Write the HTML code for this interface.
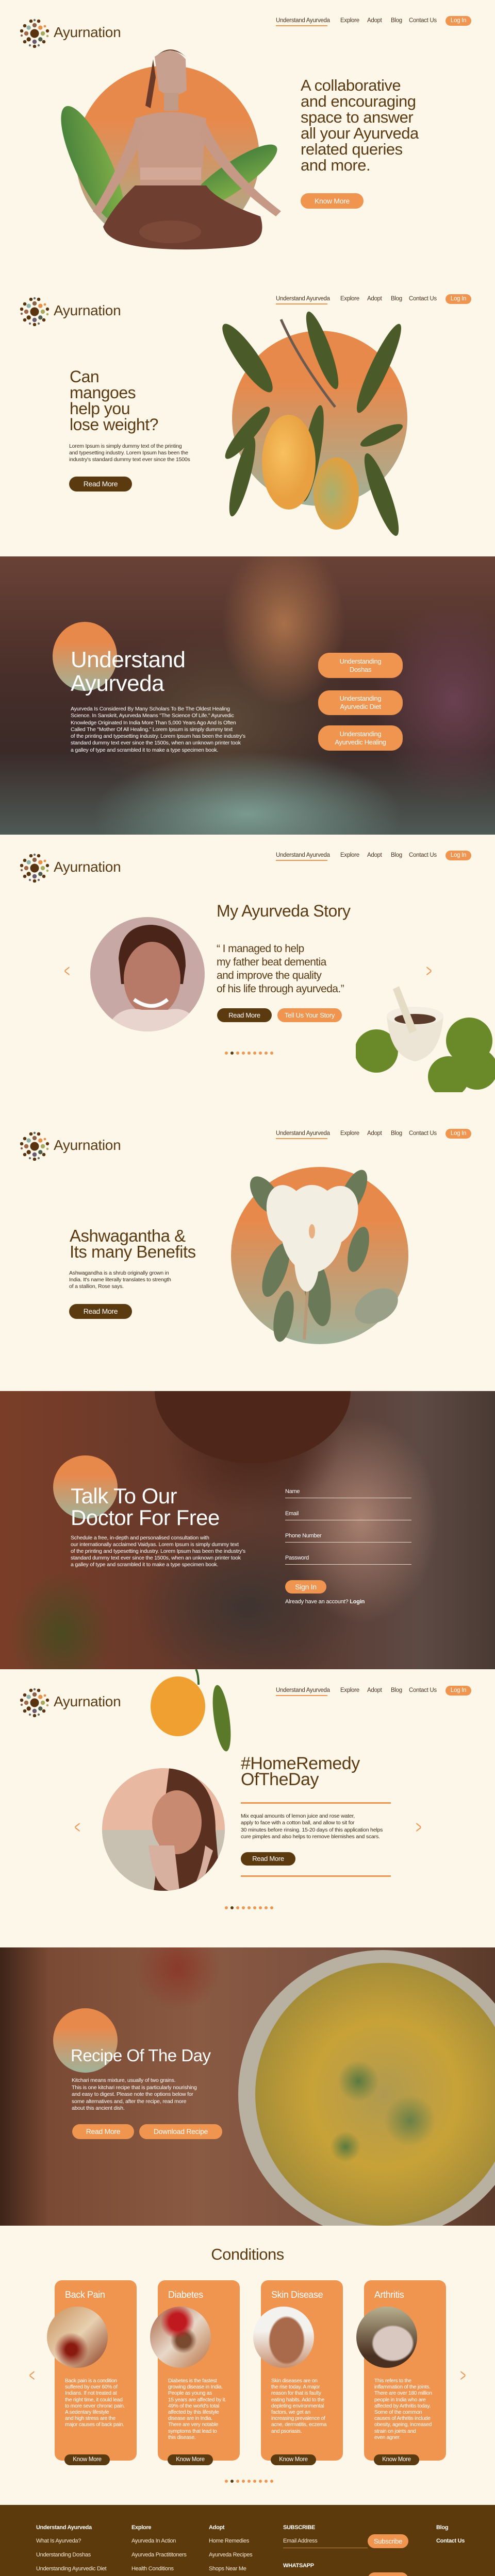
<!DOCTYPE html>
<html><head><meta charset="utf-8">
<style>
*{margin:0;padding:0;box-sizing:border-box}
html{width:960px;height:5058px;overflow:hidden}
body{width:960px;height:5058px;background:#fdf7ea;font-family:"Liberation Sans",sans-serif;color:#5b3a12;position:relative;overflow:hidden}
.a{position:absolute}
.nav{position:absolute;font-size:11.5px;color:#4a3320;letter-spacing:-0.3px;white-space:nowrap;height:1px}
.nav span{position:absolute;top:-7px}
.login{position:absolute;left:864px;width:50px;height:19px;top:-10px;border-radius:10px;background:#ef9550;color:#fff;text-align:center;line-height:19px;font-size:11.5px}
.ul{position:absolute;left:535px;width:100px;top:8px;height:1.5px;background:#ef9550}
.logotxt{position:absolute;left:104px;font-size:28px;color:#5b3a12;letter-spacing:-0.3px}
.btn{position:absolute;border-radius:16px;color:#fff;text-align:center;font-size:13px;letter-spacing:-0.3px;white-space:nowrap}
.o{background:#ef9550}.d{background:#5c3a0f}
.h{font-weight:normal;letter-spacing:-0.5px;white-space:nowrap}
.p{font-size:10.5px;letter-spacing:-0.2px;white-space:nowrap}
.w{color:#fff}
.gc{border-radius:50%;background:linear-gradient(#e8894c 30%,#9fb29a 100%)}
.card{position:absolute;top:4426px;width:159px;height:350px;background:#ef9550;border-radius:14px}
.card h4{position:absolute;left:20px;top:18px;font-size:18px;font-weight:normal;color:#fff;letter-spacing:-0.4px}
.card .im{position:absolute;left:-15px;top:51px;width:118px;height:119px;border-radius:50%}
.card .t{position:absolute;left:20px;top:190px;font-size:10.3px;line-height:12.2px;color:#fff;letter-spacing:-0.3px;white-space:nowrap}
.card .b{position:absolute;left:19px;top:338px;width:88px;height:21px;border-radius:11px;background:#5c3a0f;color:#fff;font-size:11.5px;line-height:21px;text-align:center;letter-spacing:-0.3px}
.arr{position:absolute;font-size:34px;color:#ef9550;font-weight:100;transform:scaleX(.55)}
.dots{position:absolute;left:436px;width:120px;height:6px;display:flex;gap:5px}
.dots i{display:block;width:6px;height:6px;border-radius:50%;background:#ef9550;flex:none}
.dots i.k{background:#5c3a0f}
.f{position:absolute;font-size:11px;color:#f5ead8;letter-spacing:-0.3px;white-space:nowrap}
.fh{font-weight:bold;color:#fff}
.fl{position:absolute;color:#fff;font-size:11px;letter-spacing:-0.3px}
.fl i{position:absolute;left:0;top:18px;width:245px;height:1px;background:#e8dccb}
</style></head><body>

<svg class="a" style="left:39px;top:36px" width="57" height="57" viewBox="0 0 57 57">
<circle cx="28" cy="29" r="8.5" fill="#5a3410"/>
<circle cx="28" cy="13" r="4.2" fill="#8a6048"/><circle cx="39.3" cy="17.7" r="4.2" fill="#e8904a"/><circle cx="44" cy="29" r="4.2" fill="#a8a860"/><circle cx="39.3" cy="40.3" r="4.2" fill="#4e5e4e"/><circle cx="28" cy="45" r="4.2" fill="#6a5a70"/><circle cx="16.7" cy="40.3" r="4.2" fill="#5a3410"/><circle cx="12" cy="29" r="4.2" fill="#a06848"/><circle cx="16.7" cy="17.7" r="4.2" fill="#8fb2a8"/>
<circle cx="28" cy="3" r="2.2" fill="#6a6a6a"/><circle cx="21" cy="5" r="3.3" fill="#5a3410"/><circle cx="36" cy="5" r="3.3" fill="#5a3410"/><circle cx="48" cy="15" r="2.4" fill="#e8904a"/><circle cx="53" cy="24" r="3.2" fill="#5a3410"/><circle cx="53" cy="34" r="2.2" fill="#a8a860"/><circle cx="46" cy="45" r="3.3" fill="#5a3410"/><circle cx="36" cy="52" r="2.2" fill="#6a6a6a"/><circle cx="28" cy="54" r="3.3" fill="#5a3410"/><circle cx="19" cy="52" r="2.2" fill="#6a6a6a"/><circle cx="9" cy="45" r="3.3" fill="#5a3410"/><circle cx="3" cy="33" r="2.2" fill="#8a6048"/><circle cx="3" cy="24" r="3.3" fill="#5a3410"/><circle cx="9" cy="14" r="3.3" fill="#5a3410"/>
</svg>
<div class="logotxt" style="top:47px">Ayurnation</div>
<div class="nav" style="top:41px;left:0;width:960px"><span style="left:535px">Understand Ayurveda</span><div class="ul"></div><span style="left:660px">Explore</span><span style="left:712px">Adopt</span><span style="left:758px">Blog</span><span style="left:793px">Contact Us</span><div class="login">Log In</div></div>

<svg class="a" style="left:0;top:0" width="960" height="540">
<defs><linearGradient id="g1" x1="0" y1="0" x2="0" y2="1"><stop offset=".3" stop-color="#e8894c"/><stop offset="1" stop-color="#9fb29a"/></linearGradient>
<linearGradient id="lf" x1="0" y1="0" x2="1" y2="1"><stop offset="0" stop-color="#3f7a3a"/><stop offset="1" stop-color="#8bb84a"/></linearGradient></defs>
<circle cx="325" cy="305" r="178" fill="url(#g1)"/>
<ellipse cx="180" cy="320" rx="35" ry="125" transform="rotate(-25 180 320)" fill="url(#lf)"/>
<ellipse cx="450" cy="345" rx="28" ry="105" transform="rotate(55 450 345)" fill="url(#lf)"/>
<path d="M300 110 Q335 85 360 115 L362 175 Q335 195 308 175 Z" fill="#c8a090"/>
<path d="M300 112 Q330 80 362 112 Q350 100 330 98 Q310 100 300 112Z M297 115 L282 205 L292 210 L302 150Z" fill="#6b3b2a"/>
<rect x="318" y="180" width="28" height="35" fill="#c29a88"/>
<path d="M262 230 Q330 205 400 230 L390 360 L272 360 Z" fill="#c79a88"/>
<rect x="272" y="325" width="118" height="24" fill="#d4a896"/>
<path d="M262 235 Q230 330 180 410 L192 420 Q245 340 280 260Z" fill="#c69886"/>
<path d="M398 235 Q440 330 545 410 L535 420 Q430 345 385 260Z" fill="#c69886"/>
<path d="M262 360 L400 360 Q420 390 505 420 Q520 470 470 478 Q380 488 300 482 Q210 475 200 440 Q220 400 262 360Z" fill="#6e3e30"/>
<ellipse cx="330" cy="450" rx="60" ry="22" fill="#7c4838"/>
</svg>
<div class="a h" style="left:583px;top:150px;font-size:31px;line-height:31px;color:#5b3a12">A collaborative<br>and encouraging<br>space to answer<br>all your Ayurveda<br>related queries<br>and more.</div>
<div class="btn o" style="left:583px;top:375px;width:122px;height:30px;line-height:30px;font-size:14px">Know More</div>

<svg class="a" style="left:39px;top:576px" width="57" height="57" viewBox="0 0 57 57">
<circle cx="28" cy="29" r="8.5" fill="#5a3410"/>
<circle cx="28" cy="13" r="4.2" fill="#8a6048"/><circle cx="39.3" cy="17.7" r="4.2" fill="#e8904a"/><circle cx="44" cy="29" r="4.2" fill="#a8a860"/><circle cx="39.3" cy="40.3" r="4.2" fill="#4e5e4e"/><circle cx="28" cy="45" r="4.2" fill="#6a5a70"/><circle cx="16.7" cy="40.3" r="4.2" fill="#5a3410"/><circle cx="12" cy="29" r="4.2" fill="#a06848"/><circle cx="16.7" cy="17.7" r="4.2" fill="#8fb2a8"/>
<circle cx="28" cy="3" r="2.2" fill="#6a6a6a"/><circle cx="21" cy="5" r="3.3" fill="#5a3410"/><circle cx="36" cy="5" r="3.3" fill="#5a3410"/><circle cx="48" cy="15" r="2.4" fill="#e8904a"/><circle cx="53" cy="24" r="3.2" fill="#5a3410"/><circle cx="53" cy="34" r="2.2" fill="#a8a860"/><circle cx="46" cy="45" r="3.3" fill="#5a3410"/><circle cx="36" cy="52" r="2.2" fill="#6a6a6a"/><circle cx="28" cy="54" r="3.3" fill="#5a3410"/><circle cx="19" cy="52" r="2.2" fill="#6a6a6a"/><circle cx="9" cy="45" r="3.3" fill="#5a3410"/><circle cx="3" cy="33" r="2.2" fill="#8a6048"/><circle cx="3" cy="24" r="3.3" fill="#5a3410"/><circle cx="9" cy="14" r="3.3" fill="#5a3410"/>
</svg>
<div class="logotxt" style="top:587px">Ayurnation</div>
<div class="nav" style="top:581px;left:0;width:960px"><span style="left:535px">Understand Ayurveda</span><div class="ul"></div><span style="left:660px">Explore</span><span style="left:712px">Adopt</span><span style="left:758px">Blog</span><span style="left:793px">Contact Us</span><div class="login">Log In</div></div>

<svg class="a" style="left:0;top:540px" width="960" height="540">
<defs><linearGradient id="g2" x1="0" y1="0" x2="0" y2="1"><stop offset=".3" stop-color="#e8894c"/><stop offset="1" stop-color="#9fb29a"/></linearGradient>
<radialGradient id="mg" cx=".4" cy=".4"><stop offset="0" stop-color="#f8c060"/><stop offset="1" stop-color="#e8a040"/></radialGradient>
<radialGradient id="mg2" cx=".4" cy=".5"><stop offset="0" stop-color="#a8b070"/><stop offset="1" stop-color="#e0a040"/></radialGradient></defs>
<circle cx="620" cy="272" r="170" fill="url(#g2)"/>
<g fill="#4a5a28">
<ellipse cx="480" cy="155" rx="20" ry="80" transform="rotate(-35 480 155)"/>
<ellipse cx="625" cy="140" rx="16" ry="80" transform="rotate(-20 625 140)"/>
<ellipse cx="735" cy="175" rx="17" ry="95" transform="rotate(25 735 175)"/>
<ellipse cx="480" cy="300" rx="15" ry="65" transform="rotate(40 480 300)"/>
<ellipse cx="470" cy="385" rx="15" ry="80" transform="rotate(15 470 385)"/>
<ellipse cx="740" cy="305" rx="12" ry="45" transform="rotate(65 740 305)"/>
<ellipse cx="740" cy="420" rx="17" ry="85" transform="rotate(-20 740 420)"/>
<ellipse cx="605" cy="340" rx="16" ry="95" transform="rotate(10 605 340)"/>
</g>
<path d="M545 80 Q580 160 650 250" stroke="#6a5a50" stroke-width="5" fill="none"/>
<ellipse cx="560" cy="357" rx="52" ry="92" fill="url(#mg)"/>
<ellipse cx="652" cy="418" rx="44" ry="70" fill="url(#mg2)"/>
</svg>
<div class="a h" style="left:135px;top:716px;font-size:32px;line-height:31px">Can<br>mangoes<br>help you<br>lose weight?</div>
<div class="a p" style="left:134px;top:860px;line-height:13px;color:#3a2a1a">Lorem Ipsum is simply dummy text of the printing<br>and typesetting industry. Lorem Ipsum has been the<br>industry's standard dummy text ever since the 1500s</div>
<div class="btn d" style="left:134px;top:925px;width:122px;height:29px;line-height:29px;font-size:14px">Read More</div>

<div class="a" style="left:0;top:1080px;width:960px;height:540px;background:
radial-gradient(ellipse 120px 160px at 550px 130px,#a8704a,transparent),
radial-gradient(ellipse 160px 200px at 880px 280px,#6a4050,transparent),
radial-gradient(ellipse 300px 120px at 480px 500px,#7a9a90,transparent),
radial-gradient(ellipse 260px 180px at 430px 320px,#5e4a38,transparent),
linear-gradient(#6a4236 0%,#4a2f2a 40%,#3a2a28 70%,#4e5a56 100%)"></div>
<div class="a gc" style="left:102px;top:1207px;width:125px;height:134px"></div>
<div class="a h w" style="left:137px;top:1258px;font-size:44px;line-height:46px">Understand<br>Ayurveda</div>
<div class="a p w" style="left:137px;top:1370px;line-height:13.3px">Ayurveda Is Considered By Many Scholars To Be The Oldest Healing<br>Science. In Sanskrit, Ayurveda Means "The Science Of Life." Ayurvedic<br>Knowledge Originated In India More Than 5,000 Years Ago And Is Often<br>Called The "Mother Of All Healing." Lorem Ipsum is simply dummy text<br>of the printing and typesetting industry. Lorem Ipsum has been the industry's<br>standard dummy text ever since the 1500s, when an unknown printer took<br>a galley of type and scrambled it to make a type specimen book.</div>
<div class="btn o" style="left:617px;top:1267px;width:164px;height:49px;border-radius:22px;padding-top:9px;line-height:16px">Understanding<br>Doshas</div>
<div class="btn o" style="left:617px;top:1340px;width:164px;height:48px;border-radius:22px;padding-top:8px;line-height:16px">Understanding<br>Ayurvedic Diet</div>
<div class="btn o" style="left:617px;top:1408px;width:164px;height:49px;border-radius:22px;padding-top:9px;line-height:16px">Understanding<br>Ayurvedic Healing</div>

<svg class="a" style="left:39px;top:1656px" width="57" height="57" viewBox="0 0 57 57">
<circle cx="28" cy="29" r="8.5" fill="#5a3410"/>
<circle cx="28" cy="13" r="4.2" fill="#8a6048"/><circle cx="39.3" cy="17.7" r="4.2" fill="#e8904a"/><circle cx="44" cy="29" r="4.2" fill="#a8a860"/><circle cx="39.3" cy="40.3" r="4.2" fill="#4e5e4e"/><circle cx="28" cy="45" r="4.2" fill="#6a5a70"/><circle cx="16.7" cy="40.3" r="4.2" fill="#5a3410"/><circle cx="12" cy="29" r="4.2" fill="#a06848"/><circle cx="16.7" cy="17.7" r="4.2" fill="#8fb2a8"/>
<circle cx="28" cy="3" r="2.2" fill="#6a6a6a"/><circle cx="21" cy="5" r="3.3" fill="#5a3410"/><circle cx="36" cy="5" r="3.3" fill="#5a3410"/><circle cx="48" cy="15" r="2.4" fill="#e8904a"/><circle cx="53" cy="24" r="3.2" fill="#5a3410"/><circle cx="53" cy="34" r="2.2" fill="#a8a860"/><circle cx="46" cy="45" r="3.3" fill="#5a3410"/><circle cx="36" cy="52" r="2.2" fill="#6a6a6a"/><circle cx="28" cy="54" r="3.3" fill="#5a3410"/><circle cx="19" cy="52" r="2.2" fill="#6a6a6a"/><circle cx="9" cy="45" r="3.3" fill="#5a3410"/><circle cx="3" cy="33" r="2.2" fill="#8a6048"/><circle cx="3" cy="24" r="3.3" fill="#5a3410"/><circle cx="9" cy="14" r="3.3" fill="#5a3410"/>
</svg>
<div class="logotxt" style="top:1667px">Ayurnation</div>
<div class="nav" style="top:1661px;left:0;width:960px"><span style="left:535px">Understand Ayurveda</span><div class="ul"></div><span style="left:660px">Explore</span><span style="left:712px">Adopt</span><span style="left:758px">Blog</span><span style="left:793px">Contact Us</span><div class="login">Log In</div></div>

<div class="a h" style="left:420px;top:1750px;font-size:32px;line-height:36px">My Ayurveda Story</div>
<svg class="a" style="left:175px;top:1780px" width="222" height="222">
<defs><clipPath id="c4"><circle cx="111" cy="111" r="111"/></clipPath></defs>
<g clip-path="url(#c4)"><rect width="222" height="222" fill="#c8a8a4"/>
<path d="M55 80 Q60 15 120 15 Q185 20 185 95 L180 130 L60 130Z" fill="#4a2418"/>
<ellipse cx="120" cy="120" rx="55" ry="72" fill="#b87a68"/>
<path d="M30 222 Q50 170 100 180 L150 180 Q200 170 210 222Z" fill="#e8d4cc"/>
<path d="M85 160 Q120 185 150 160" stroke="#fff" stroke-width="7" fill="none"/></g>
</svg>
<div class="a h" style="left:420px;top:1829px;font-size:21px;line-height:26px;letter-spacing:-0.6px">“ I managed to help<br>my father beat dementia<br>and improve the quality<br>of his life through ayurveda.”</div>
<div class="btn d" style="left:421px;top:1957px;width:106px;height:27px;line-height:27px">Read More</div>
<div class="btn o" style="left:538px;top:1957px;width:125px;height:27px;line-height:27px">Tell Us Your Story</div>
<div class="arr" style="left:120px;top:1866px">&lt;</div>
<div class="arr" style="left:822px;top:1866px">&gt;</div>
<div class="dots" style="top:2041px"><i></i><i class="k"></i><i></i><i></i><i></i><i></i><i></i><i></i><i></i></div>
<svg class="a" style="left:690px;top:1900px" width="270" height="220">
<g fill="#6a8a2a"><circle cx="40" cy="140" r="42"/><circle cx="220" cy="120" r="45"/><circle cx="235" cy="175" r="40"/><circle cx="180" cy="190" r="40"/></g>
<path d="M60 70 L170 70 Q165 150 115 160 Q65 150 60 70Z" fill="#ece4d4"/>
<ellipse cx="115" cy="72" rx="55" ry="18" fill="#f4eee2"/>
<ellipse cx="115" cy="78" rx="40" ry="10" fill="#5a3a2a"/>
<path d="M72 20 L84 14 L118 100 L104 106Z" fill="#e6dcc6"/>
</svg>

<svg class="a" style="left:39px;top:2196px" width="57" height="57" viewBox="0 0 57 57">
<circle cx="28" cy="29" r="8.5" fill="#5a3410"/>
<circle cx="28" cy="13" r="4.2" fill="#8a6048"/><circle cx="39.3" cy="17.7" r="4.2" fill="#e8904a"/><circle cx="44" cy="29" r="4.2" fill="#a8a860"/><circle cx="39.3" cy="40.3" r="4.2" fill="#4e5e4e"/><circle cx="28" cy="45" r="4.2" fill="#6a5a70"/><circle cx="16.7" cy="40.3" r="4.2" fill="#5a3410"/><circle cx="12" cy="29" r="4.2" fill="#a06848"/><circle cx="16.7" cy="17.7" r="4.2" fill="#8fb2a8"/>
<circle cx="28" cy="3" r="2.2" fill="#6a6a6a"/><circle cx="21" cy="5" r="3.3" fill="#5a3410"/><circle cx="36" cy="5" r="3.3" fill="#5a3410"/><circle cx="48" cy="15" r="2.4" fill="#e8904a"/><circle cx="53" cy="24" r="3.2" fill="#5a3410"/><circle cx="53" cy="34" r="2.2" fill="#a8a860"/><circle cx="46" cy="45" r="3.3" fill="#5a3410"/><circle cx="36" cy="52" r="2.2" fill="#6a6a6a"/><circle cx="28" cy="54" r="3.3" fill="#5a3410"/><circle cx="19" cy="52" r="2.2" fill="#6a6a6a"/><circle cx="9" cy="45" r="3.3" fill="#5a3410"/><circle cx="3" cy="33" r="2.2" fill="#8a6048"/><circle cx="3" cy="24" r="3.3" fill="#5a3410"/><circle cx="9" cy="14" r="3.3" fill="#5a3410"/>
</svg>
<div class="logotxt" style="top:2207px">Ayurnation</div>
<div class="nav" style="top:2201px;left:0;width:960px"><span style="left:535px">Understand Ayurveda</span><div class="ul"></div><span style="left:660px">Explore</span><span style="left:712px">Adopt</span><span style="left:758px">Blog</span><span style="left:793px">Contact Us</span><div class="login">Log In</div></div>

<svg class="a" style="left:440px;top:2260px" width="380" height="360">
<defs><linearGradient id="g5" x1="0" y1="0" x2="0" y2="1"><stop offset=".3" stop-color="#e8894c"/><stop offset="1" stop-color="#9fb29a"/></linearGradient></defs>
<circle cx="180" cy="177" r="172" fill="url(#g5)"/>
<g fill="#6a7a58">
<ellipse cx="75" cy="60" rx="22" ry="42" transform="rotate(-35 75 60)"/>
<ellipse cx="245" cy="55" rx="20" ry="48" transform="rotate(25 245 55)"/>
<ellipse cx="255" cy="165" rx="18" ry="45" transform="rotate(15 255 165)"/>
<ellipse cx="95" cy="205" rx="20" ry="55" transform="rotate(20 95 205)"/>
<ellipse cx="175" cy="245" rx="24" ry="70" transform="rotate(-10 175 245)"/>
<ellipse cx="110" cy="295" rx="18" ry="50" transform="rotate(10 110 295)"/>
<ellipse cx="290" cy="275" rx="30" ry="45" transform="rotate(60 290 275)" fill="#9aa088"/>
</g>
<path d="M158 220 L150 340" stroke="#b89a78" stroke-width="6"/>
<g fill="#f2eee2">
<ellipse cx="165" cy="125" rx="60" ry="85"/>
<ellipse cx="120" cy="100" rx="40" ry="62" transform="rotate(-20 120 100)"/>
<ellipse cx="210" cy="100" rx="42" ry="60" transform="rotate(20 210 100)"/>
<ellipse cx="155" cy="185" rx="24" ry="62"/>
</g>
<ellipse cx="165" cy="130" rx="6" ry="14" fill="#e8b080"/>
</svg>
<div class="a h" style="left:135px;top:2383px;font-size:33px;line-height:31px">Ashwagantha &amp;<br>Its many Benefits</div>
<div class="a p" style="left:134px;top:2465px;line-height:13px;color:#3a2a1a">Ashwagandha is a shrub originally grown in<br>India. It's name literally translates to strength<br>of a stallion, Rose says.</div>
<div class="btn d" style="left:134px;top:2531px;width:122px;height:29px;line-height:29px;font-size:14px">Read More</div>

<div class="a" style="left:0;top:2700px;width:960px;height:540px;background:
radial-gradient(ellipse 170px 130px at 490px 110px,#4a2418,transparent),
radial-gradient(ellipse 100px 120px at 120px 470px,#4a4a20,transparent),
radial-gradient(ellipse 150px 200px at 700px 250px,#a88070,transparent),
radial-gradient(ellipse 220px 160px at 480px 420px,#3e3430,transparent),
linear-gradient(90deg,#7a3e28 0%,#6a3a2a 30%,#5a3a30 60%,#5e4a44 85%,#4a3a34 100%)"></div>
<div class="a" style="left:300px;top:2700px;width:380px;height:140px;border-radius:0 0 190px 190px/0 0 140px 140px;background:#4e261a"></div>
<div class="a gc" style="left:103px;top:2825px;width:125px;height:123px"></div>
<div class="a h w" style="left:137px;top:2883px;font-size:42px;line-height:42px">Talk To Our<br>Doctor For Free</div>
<div class="a p w" style="left:137px;top:2979px;line-height:13px">Schedule a free, in-depth and personalised consultation with<br>our internationally acclaimed Vaidyas. Lorem Ipsum is simply dummy text<br>of the printing and typesetting industry. Lorem Ipsum has been the industry's<br>standard dummy text ever since the 1500s, when an unknown printer took<br>a galley of type and scrambled it to make a type specimen book.</div>
<div class="fl" style="left:553px;top:2889px">Name<i></i></div>
<div class="fl" style="left:553px;top:2932px">Email<i></i></div>
<div class="fl" style="left:553px;top:2975px">Phone Number<i></i></div>
<div class="fl" style="left:553px;top:3018px">Password<i></i></div>
<div class="btn o" style="left:553px;top:3067px;width:80px;height:26px;line-height:26px;font-size:14px">Sign In</div>
<div class="a p w" style="left:553px;top:3103px;font-size:11px">Already have an account? <b>Login</b></div>

<svg class="a" style="left:39px;top:3276px" width="57" height="57" viewBox="0 0 57 57">
<circle cx="28" cy="29" r="8.5" fill="#5a3410"/>
<circle cx="28" cy="13" r="4.2" fill="#8a6048"/><circle cx="39.3" cy="17.7" r="4.2" fill="#e8904a"/><circle cx="44" cy="29" r="4.2" fill="#a8a860"/><circle cx="39.3" cy="40.3" r="4.2" fill="#4e5e4e"/><circle cx="28" cy="45" r="4.2" fill="#6a5a70"/><circle cx="16.7" cy="40.3" r="4.2" fill="#5a3410"/><circle cx="12" cy="29" r="4.2" fill="#a06848"/><circle cx="16.7" cy="17.7" r="4.2" fill="#8fb2a8"/>
<circle cx="28" cy="3" r="2.2" fill="#6a6a6a"/><circle cx="21" cy="5" r="3.3" fill="#5a3410"/><circle cx="36" cy="5" r="3.3" fill="#5a3410"/><circle cx="48" cy="15" r="2.4" fill="#e8904a"/><circle cx="53" cy="24" r="3.2" fill="#5a3410"/><circle cx="53" cy="34" r="2.2" fill="#a8a860"/><circle cx="46" cy="45" r="3.3" fill="#5a3410"/><circle cx="36" cy="52" r="2.2" fill="#6a6a6a"/><circle cx="28" cy="54" r="3.3" fill="#5a3410"/><circle cx="19" cy="52" r="2.2" fill="#6a6a6a"/><circle cx="9" cy="45" r="3.3" fill="#5a3410"/><circle cx="3" cy="33" r="2.2" fill="#8a6048"/><circle cx="3" cy="24" r="3.3" fill="#5a3410"/><circle cx="9" cy="14" r="3.3" fill="#5a3410"/>
</svg>
<div class="logotxt" style="top:3287px">Ayurnation</div>
<div class="nav" style="top:3282px;left:0;width:960px"><span style="left:535px">Understand Ayurveda</span><div class="ul"></div><span style="left:660px">Explore</span><span style="left:712px">Adopt</span><span style="left:758px">Blog</span><span style="left:793px">Contact Us</span><div class="login">Log In</div></div>
<svg class="a" style="left:285px;top:3240px" width="175" height="175">
<path d="M95 0 Q100 10 100 30" stroke="#3a6a2a" stroke-width="4" fill="none"/>
<ellipse cx="60" cy="72" rx="53" ry="58" fill="#f0a030"/>
<ellipse cx="145" cy="95" rx="15" ry="65" transform="rotate(-8 145 95)" fill="#5a7a2a"/>
</svg>
<div class="a h" style="left:467px;top:3408px;font-size:34px;line-height:31px">#HomeRemedy<br>OfTheDay</div>
<div class="a" style="left:467px;top:3498px;width:291px;height:3px;background:#ef9550"></div>
<div class="a p" style="left:467px;top:3519px;line-height:13.3px;color:#3a2a1a">Mix equal amounts of lemon juice and rose water,<br>apply to face with a cotton ball, and allow to sit for<br>30 minutes before rinsing. 15-20 days of this application helps<br>cure pimples and also helps to remove blemishes and scars.</div>
<div class="btn d" style="left:467px;top:3595px;width:106px;height:26px;line-height:26px">Read More</div>
<div class="a" style="left:467px;top:3640px;width:291px;height:3px;background:#ef9550"></div>
<svg class="a" style="left:198px;top:3432px" width="238" height="238">
<defs><clipPath id="c7"><circle cx="119" cy="119" r="119"/></clipPath></defs>
<g clip-path="url(#c7)"><rect width="238" height="238" fill="#e8b8a0"/>
<rect x="0" y="120" width="238" height="118" fill="#c8c0b0"/>
<path d="M130 0 Q220 10 220 120 L230 238 L100 238Z" fill="#5a3020"/>
<ellipse cx="145" cy="105" rx="48" ry="62" fill="#c88a70"/>
<path d="M90 150 Q100 230 130 238 L150 238 L140 150Z M200 150 Q190 220 170 238 L190 238 L215 160Z" fill="#d8b0a0"/></g>
</svg>
<div class="arr" style="left:140px;top:3528px">&lt;</div>
<div class="arr" style="left:802px;top:3528px">&gt;</div>
<div class="dots" style="top:3700px"><i></i><i class="k"></i><i></i><i></i><i></i><i></i><i></i><i></i><i></i></div>

<div class="a" style="left:0;top:3780px;width:960px;height:540px;overflow:hidden;background:
radial-gradient(circle 85px at 345px 40px,#8a3a2a,transparent 98%),
linear-gradient(90deg,#3e2418 0%,#7a4a34 10%,#8a5a42 40%,#7a5040 70%,#5a3a2a 100%)">
<div class="a" style="left:462px;top:5px;width:560px;height:560px;border-radius:50%;background:#b8b0a0"></div>
<div class="a" style="left:495px;top:30px;width:500px;height:510px;border-radius:50%;background:
radial-gradient(circle 40px at 40% 45%,#5a7a40,transparent),
radial-gradient(circle 50px at 60% 60%,#6a8048,transparent),
radial-gradient(circle 30px at 35% 70%,#5a7a40,transparent),
radial-gradient(circle at 50% 50%,#b09a50 0%,#c8a238 40%,#a08a38 75%,#8a7a48 100%)"></div>
</div>
<div class="a gc" style="left:103px;top:3898px;width:125px;height:125px"></div>
<div class="a h w" style="left:137px;top:3971px;font-size:33px;line-height:38px">Recipe Of The Day</div>
<div class="a p w" style="left:139px;top:4032px;line-height:13.5px">Kitchari means mixture, usually of two grains.<br>This is one kitchari recipe that is particularly nourishing<br>and easy to digest. Please note the options below for<br>some alternatives and, after the recipe, read more<br>about this ancient dish.</div>
<div class="btn o" style="left:140px;top:4123px;width:120px;height:29px;line-height:29px;font-size:14px">Read More</div>
<div class="btn o" style="left:270px;top:4123px;width:161px;height:29px;line-height:29px;font-size:14px">Download Recipe</div>

<div class="a h" style="left:0;width:960px;text-align:center;top:4358px;font-size:31px;line-height:36px">Conditions</div>
<div class="arr" style="left:52px;top:4592px">&lt;</div>
<div class="arr" style="left:888px;top:4592px">&gt;</div>
<div class="card" style="left:106px"><h4>Back Pain</h4><div class="im" style="background:radial-gradient(circle at 40% 70%,#8a1a10 10%,transparent 30%),linear-gradient(135deg,#c8905a,#e8d0b0 50%,#8a3a20)"></div>
<div class="t">Back  pain is a condition<br>suffered by over 60% of<br>Indians. If not treated at<br>the right time, it could lead<br>to more sever chronic pain.<br>A sedentary lifestyle<br>and high stress are the<br>major causes of back pain.</div><div class="b">Know More</div></div>
<div class="card" style="left:306px"><h4>Diabetes</h4><div class="im" style="background:radial-gradient(circle at 45% 25%,#c01a20 15%,transparent 30%),radial-gradient(circle at 55% 55%,#7a4a30 15%,transparent 28%),linear-gradient(135deg,#a86040,#e8d8c8 50%,#b87040)"></div>
<div class="t">Diabetes is the fastest<br>growing disease in India.<br>People as young as<br>15 years are affected by it.<br>49% of the world's total<br>affected by this lifestyle<br>disease are in India.<br>There are very notable<br>symptoms that lead to<br>this disease.</div><div class="b">Know More</div></div>
<div class="card" style="left:506px"><h4>Skin Disease</h4><div class="im" style="background:radial-gradient(ellipse 30% 40% at 55% 55%,#a86a4a 90%,transparent 100%),linear-gradient(#f4f2ee 40%,#c89070)"></div>
<div class="t">Skin diseases are on<br>the rise today. A major<br>reason for that is faulty<br>eating habits. Add to the<br>depleting environmental<br>factors, we get an<br>increasing prevalence of<br>acne, dermatitis, eczema<br>and psoriasis.</div><div class="b">Know More</div></div>
<div class="card" style="left:706px"><h4>Arthritis</h4><div class="im" style="background:radial-gradient(ellipse 35% 30% at 60% 60%,#d8c8c0 90%,transparent 100%),linear-gradient(#b8b090,#4a3020 80%)"></div>
<div class="t">This refers to the<br>inflammation of the joints.<br>There are over 180 million<br>people in India who are<br>affected by Arthritis today.<br>Some of the common<br>causes of Arthritis include<br>obesity, ageing, increased<br>strain on joints and<br>even agner.</div><div class="b">Know More</div></div>
<div class="dots" style="top:4813px"><i></i><i class="k"></i><i></i><i></i><i></i><i></i><i></i><i></i><i></i></div>

<div class="a" style="left:0;top:4862px;width:960px;height:196px;background:#5c3a0b"></div>
<div class="f fh" style="left:70px;top:4900px">Understand Ayurveda</div>
<div class="f" style="left:70px;top:4926px">What Is Ayurveda?</div>
<div class="f" style="left:70px;top:4953px">Understanding Doshas</div>
<div class="f" style="left:70px;top:4980px">Understanding Ayurvedic Diet</div>
<div class="f" style="left:70px;top:5006px">Undestanding Ayurvedic Heeling</div>
<div class="f fh" style="left:255px;top:4900px">Explore</div>
<div class="f" style="left:255px;top:4926px">Ayurveda In Action</div>
<div class="f" style="left:255px;top:4953px">Ayurveda Practititoners</div>
<div class="f" style="left:255px;top:4980px">Health Conditions</div>
<div class="f" style="left:255px;top:5006px">Ayurveda Ingredients</div>
<div class="f fh" style="left:405px;top:4900px">Adopt</div>
<div class="f" style="left:405px;top:4926px">Home Remedies</div>
<div class="f" style="left:405px;top:4953px">Ayurveda Recipes</div>
<div class="f" style="left:405px;top:4980px">Shops Near Me</div>
<div class="f fh" style="left:549px;top:4900px">SUBSCRIBE</div>
<div class="f" style="left:549px;top:4926px">Email Address</div>
<div class="a" style="left:549px;top:4945px;width:164px;height:1px;background:#c08a50"></div>
<div class="btn o" style="left:713px;top:4919px;width:79px;height:27px;line-height:27px">Subscribe</div>
<div class="f fh" style="left:549px;top:4974px">WHATSAPP</div>
<div class="f" style="left:549px;top:5000px">Mobile Number</div>
<div class="a" style="left:549px;top:5020px;width:164px;height:1px;background:#c08a50"></div>
<div class="btn o" style="left:713px;top:4993px;width:79px;height:27px;line-height:27px">Submit</div>
<div class="f fh" style="left:846px;top:4900px">Blog</div>
<div class="f fh" style="left:846px;top:4926px">Contact Us</div>
</body></html>
